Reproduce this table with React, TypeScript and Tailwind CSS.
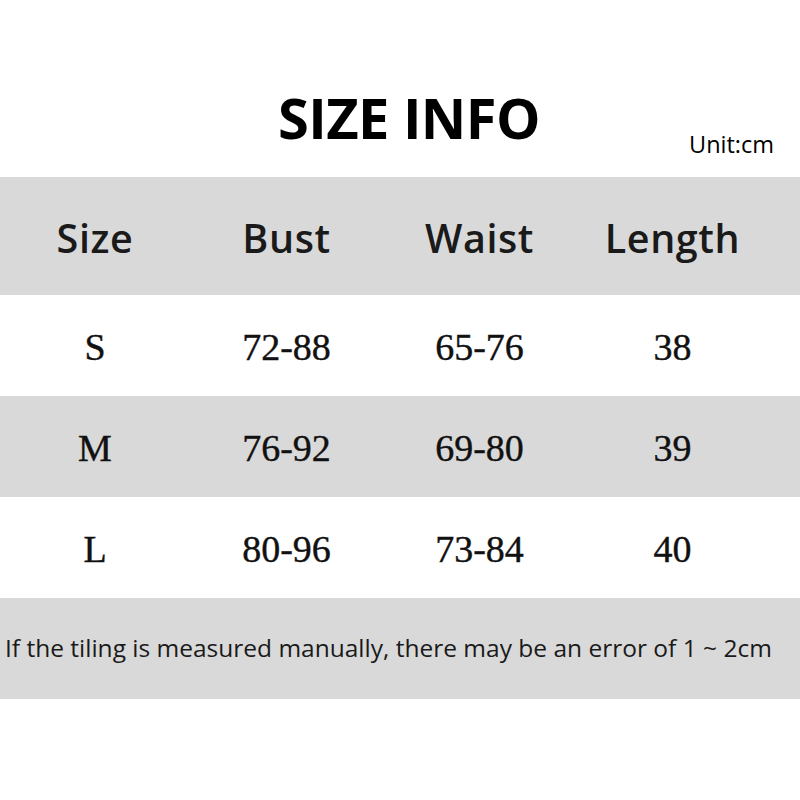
import React from 'react';

const rows = [
  { size: 'S', bust: '72-88', waist: '65-76', length: '38' },
  { size: 'M', bust: '76-92', waist: '69-80', length: '39' },
  { size: 'L', bust: '80-96', waist: '73-84', length: '40' },
];

const cols = 'grid grid-cols-[190px_193px_193px_193px] items-center justify-items-center';

const App: React.FC = () => {
  return (
    <div className="w-[800px] h-[800px] bg-white text-[#111] overflow-hidden">
      {/* title */}
      <div className="h-[177px] relative">
        <h1 className="pt-[89px] pl-[18px] text-center text-[56px] font-bold leading-none tracking-[-0.01em] font-['Open_Sans',sans-serif] text-black">
          SIZE INFO
        </h1>
        <span className="absolute left-[689px] top-[133px] text-[23.5px] leading-none font-['Open_Sans',sans-serif] text-black">
          Unit:cm
        </span>
      </div>

      {/* header */}
      <div className={`${cols} h-[118px] pt-[5px] bg-[#d9d9d9] font-['Open_Sans',sans-serif] font-semibold text-[39.5px] tracking-[0.015em] text-[#1a1a1a]`}>
        <span>Size</span>
        <span>Bust</span>
        <span>Waist</span>
        <span>Length</span>
      </div>

      {rows.map((r, i) => (
        <div
          key={r.size}
          className={`${cols} h-[101px] pt-[3px] font-['Liberation_Serif',serif] text-[38px] text-[#111] [-webkit-text-stroke:0.4px_#111] ${i === 1 ? 'bg-[#d9d9d9]' : 'bg-white'}`}
        >
          <span>{r.size}</span>
          <span>{r.bust}</span>
          <span>{r.waist}</span>
          <span>{r.length}</span>
        </div>
      ))}

      {/* note */}
      <div className="h-[101px] bg-[#d9d9d9] flex items-center pl-[5px] font-['Open_Sans',sans-serif] text-[24.5px] text-[#1a1a1a] whitespace-nowrap">
        If the tiling is measured manually, there may be an error of 1 ~ 2cm
      </div>
    </div>
  );
};

export default App;
